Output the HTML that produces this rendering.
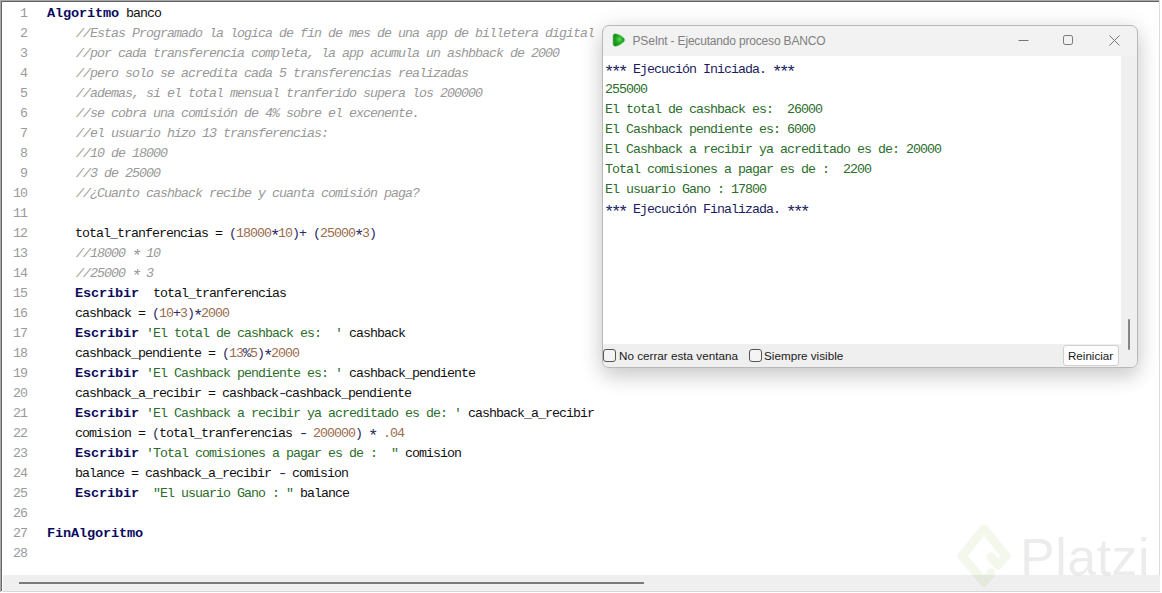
<!DOCTYPE html>
<html><head><meta charset="utf-8">
<style>
html,body{margin:0;padding:0;}
body{width:1162px;height:593px;position:relative;overflow:hidden;background:#fff;}
.abs{position:absolute;}
.ed-top{position:absolute;left:0;top:0;width:1160px;height:1px;background:#a9a9a9;}
.ed-top2{position:absolute;left:1px;top:1px;width:1159px;height:1px;background:#626262;}
.ed-left{position:absolute;left:0;top:0;width:1px;height:592px;background:#a9a9a9;}
.ed-left2{position:absolute;left:1px;top:1px;width:1px;height:590px;background:#666;}
.ed-right{position:absolute;left:1159px;top:0;width:1px;height:592px;background:#dcdcdc;}
.hscroll{position:absolute;left:3px;top:575px;width:1157px;height:16px;background:#efefef;}
.hscroll-b{position:absolute;left:2px;top:591px;width:1158px;height:1px;background:#d8d8d8;}
.hthumb{position:absolute;left:19px;top:582px;width:625px;height:2px;background:#7a7a7a;}
#code{position:absolute;left:0;top:4px;width:1162px;height:580px;}
.ln{position:absolute;left:0;width:27px;text-align:right;font-family:"Liberation Mono",monospace;font-size:13.3px;letter-spacing:-0.98px;color:#9a9a9a;line-height:20px;height:20px;}
.cl{position:absolute;left:47px;font-family:"Liberation Mono",monospace;font-size:13.3px;letter-spacing:-0.98px;line-height:20px;height:20px;white-space:pre;color:#111;}
.k{font-weight:bold;color:#0b0b5e;font-size:13.6px;letter-spacing:-0.16px;}
.c{color:#999;font-style:italic;position:relative;left:1px;}
.s{color:#2b6e2b;}
.n{color:#9c6c4e;}
.o{color:#2a2a62;}
.dash{display:inline-block;transform:translateX(0.5px) scaleX(1.35);}
.ast{display:inline-block;transform:translateY(2.6px) scale(1.3);}
/* window */
.win{position:absolute;left:602px;top:25px;width:534px;height:341px;border:1px solid #b8b8b8;border-radius:7px;background:#f2f2f2;box-shadow:0 3px 24px rgba(0,0,0,0.13), 0 10px 20px rgba(0,0,0,0.12);overflow:hidden;}
.title{position:absolute;left:29.5px;top:8px;font-family:"Liberation Sans",sans-serif;font-size:12px;letter-spacing:-0.18px;color:#808080;white-space:pre;}
.cons{position:absolute;left:0;top:30px;width:518px;height:288px;background:#fff;}
.vtrack{position:absolute;left:518px;top:30px;width:16px;height:311px;background:#efefef;}
.vthumb{position:absolute;left:525px;top:293px;width:2px;height:31px;background:#858585;border-radius:1px;}
.con{position:absolute;left:2px;font-family:"Liberation Mono",monospace;font-size:13.3px;letter-spacing:-0.98px;line-height:20px;height:20px;white-space:pre;}
.cn{color:#1c1c5c;}
.cg{color:#2b6e2b;}
.bbar{position:absolute;left:0;top:318px;width:518px;height:23px;background:#efefef;}
.cb{position:absolute;top:323px;width:11px;height:11px;border:1px solid #555;border-radius:3px;background:#f4f4f4;}
.lbl{position:absolute;top:323px;font-family:"Liberation Sans",sans-serif;font-size:11.7px;color:#1a1a1a;white-space:pre;}
.btn{position:absolute;left:460px;top:319px;width:54px;height:19px;border:1px solid #d0d0d0;border-radius:3px;background:#fdfdfd;}
.btnt{position:absolute;left:465px;top:323px;font-family:"Liberation Sans",sans-serif;font-size:11.6px;color:#1a1a1a;}
.platzi{position:absolute;left:1020px;top:527px;font-family:"Liberation Sans",sans-serif;font-size:52px;color:rgba(0,0,0,0.075);letter-spacing:0.5px;}
</style></head><body>
<div class="ed-top"></div><div class="ed-top2"></div><div class="ed-left"></div><div class="ed-left2"></div><div class="ed-right"></div>
<div id="code">
<div class="ln" style="top:0px">1</div>
<div class="cl" style="top:0px"><span class="k">Algoritmo</span> banco</div>
<div class="ln" style="top:20px">2</div>
<div class="cl" style="top:20px">    <span class="c">//Estas Programado la logica de fin de mes de una app de billetera digital</span></div>
<div class="ln" style="top:40px">3</div>
<div class="cl" style="top:40px">    <span class="c">//por cada transferencia completa, la app acumula un ashbback de 2000</span></div>
<div class="ln" style="top:60px">4</div>
<div class="cl" style="top:60px">    <span class="c">//pero solo se acredita cada 5 transferencias realizadas</span></div>
<div class="ln" style="top:80px">5</div>
<div class="cl" style="top:80px">    <span class="c">//ademas, si el total mensual tranferido supera los 200000</span></div>
<div class="ln" style="top:100px">6</div>
<div class="cl" style="top:100px">    <span class="c">//se cobra una comisión de 4% sobre el excenente.</span></div>
<div class="ln" style="top:120px">7</div>
<div class="cl" style="top:120px">    <span class="c">//el usuario hizo 13 transferencias:</span></div>
<div class="ln" style="top:140px">8</div>
<div class="cl" style="top:140px">    <span class="c">//10 de 18000</span></div>
<div class="ln" style="top:160px">9</div>
<div class="cl" style="top:160px">    <span class="c">//3 de 25000</span></div>
<div class="ln" style="top:180px">10</div>
<div class="cl" style="top:180px">    <span class="c">//¿Cuanto cashback recibe y cuanta comisión paga?</span></div>
<div class="ln" style="top:200px">11</div>
<div class="ln" style="top:220px">12</div>
<div class="cl" style="top:220px">    total_tranferencias = <span class="o">(</span><span class="n">18000</span><span class="o"><span class="ast">*</span></span><span class="n">10</span><span class="o">)+</span> <span class="o">(</span><span class="n">25000</span><span class="o"><span class="ast">*</span></span><span class="n">3</span><span class="o">)</span></div>
<div class="ln" style="top:240px">13</div>
<div class="cl" style="top:240px">    <span class="c">//18000 <span class="ast">*</span> 10</span></div>
<div class="ln" style="top:260px">14</div>
<div class="cl" style="top:260px">    <span class="c">//25000 <span class="ast">*</span> 3</span></div>
<div class="ln" style="top:280px">15</div>
<div class="cl" style="top:280px">    <span class="k">Escribir</span>  total_tranferencias</div>
<div class="ln" style="top:300px">16</div>
<div class="cl" style="top:300px">    cashback = <span class="o">(</span><span class="n">10</span><span class="o">+</span><span class="n">3</span><span class="o">)<span class="ast">*</span></span><span class="n">2000</span></div>
<div class="ln" style="top:320px">17</div>
<div class="cl" style="top:320px">    <span class="k">Escribir</span> <span class="s">'El total de cashback es:  '</span> cashback</div>
<div class="ln" style="top:340px">18</div>
<div class="cl" style="top:340px">    cashback_pendiente = <span class="o">(</span><span class="n">13</span><span class="o">%</span><span class="n">5</span><span class="o">)<span class="ast">*</span></span><span class="n">2000</span></div>
<div class="ln" style="top:360px">19</div>
<div class="cl" style="top:360px">    <span class="k">Escribir</span> <span class="s">'El Cashback pendiente es: '</span> cashback_pendiente</div>
<div class="ln" style="top:380px">20</div>
<div class="cl" style="top:380px">    cashback_a_recibir = cashback<span class="o"><span class="dash">-</span></span>cashback_pendiente</div>
<div class="ln" style="top:400px">21</div>
<div class="cl" style="top:400px">    <span class="k">Escribir</span> <span class="s">'El Cashback a recibir ya acreditado es de: '</span> cashback_a_recibir</div>
<div class="ln" style="top:420px">22</div>
<div class="cl" style="top:420px">    comision = <span class="o">(</span>total_tranferencias <span class="o"><span class="dash">-</span></span> <span class="n">200000</span><span class="o">)</span> <span class="o"><span class="ast">*</span></span> <span class="n">.04</span></div>
<div class="ln" style="top:440px">23</div>
<div class="cl" style="top:440px">    <span class="k">Escribir</span> <span class="s">'Total comisiones a pagar es de :  "</span> comision</div>
<div class="ln" style="top:460px">24</div>
<div class="cl" style="top:460px">    balance = cashback_a_recibir <span class="o"><span class="dash">-</span></span> comision</div>
<div class="ln" style="top:480px">25</div>
<div class="cl" style="top:480px">    <span class="k">Escribir</span>  <span class="s">"El usuario Gano : "</span> balance</div>
<div class="ln" style="top:500px">26</div>
<div class="ln" style="top:520px">27</div>
<div class="cl" style="top:520px"><span class="k">FinAlgoritmo</span></div>
<div class="ln" style="top:540px">28</div>
</div>
<div class="hscroll"></div><div class="hscroll-b"></div><div class="hthumb"></div>
<svg class="abs" style="left:955px;top:521px" width="60" height="68" viewBox="0 0 60 68"><g opacity="0.1"><path d="M36 52 L29 61 L7 35 L29 8 L51 35 L43 44 L36 36" fill="none" stroke="rgb(140,180,70)" stroke-width="9" stroke-linejoin="round" stroke-linecap="round"/></g></svg>
<div class="platzi">Platzi</div>
<div class="win">
 <svg class="abs" style="left:9px;top:7px" width="15" height="15" viewBox="0 0 15 15"><defs><radialGradient id="gg" cx="0.55" cy="0.45" r="0.6"><stop offset="0" stop-color="#5fd85f"/><stop offset="0.5" stop-color="#1fa51f"/><stop offset="1" stop-color="#128a12"/></radialGradient></defs><path d="M3 0.5 C1.5 0.5 0.8 1.8 0.8 3.5 L0.8 10.5 C0.8 12.3 1.8 13.5 3.5 13.5 C6.5 13.5 11 10.2 12.4 8.3 C13.1 7.4 13.1 6.4 12.4 5.5 C11 3.6 6.5 0.5 3 0.5 Z" fill="url(#gg)" stroke="#bdecbd" stroke-width="0.7"/></svg>
 <div class="title">PSeInt - Ejecutando proceso BANCO</div>
 <svg class="abs" style="left:405px;top:8px" width="125" height="16" viewBox="0 0 125 16">
  <line x1="10.5" y1="6.5" x2="20.5" y2="6.5" stroke="#777" stroke-width="1"/>
  <rect x="55.5" y="1.5" width="9" height="9" rx="1.8" fill="none" stroke="#777" stroke-width="1"/>
  <path d="M101.5 1.5 L111.5 11.5 M111.5 1.5 L101.5 11.5" stroke="#777" stroke-width="1"/>
 </svg>
 <div class="cons">
<div class="con cn" style="top:4px"><span class="ast">*</span><span class="ast">*</span><span class="ast">*</span> Ejecución Iniciada. <span class="ast">*</span><span class="ast">*</span><span class="ast">*</span></div>
<div class="con cg" style="top:24px">255000</div>
<div class="con cg" style="top:44px">El total de cashback es:  26000</div>
<div class="con cg" style="top:64px">El Cashback pendiente es: 6000</div>
<div class="con cg" style="top:84px">El Cashback a recibir ya acreditado es de: 20000</div>
<div class="con cg" style="top:104px">Total comisiones a pagar es de :  2200</div>
<div class="con cg" style="top:124px">El usuario Gano : 17800</div>
<div class="con cn" style="top:144px"><span class="ast">*</span><span class="ast">*</span><span class="ast">*</span> Ejecución Finalizada. <span class="ast">*</span><span class="ast">*</span><span class="ast">*</span></div>
 </div>
 <div class="vtrack"></div>
 <div class="vthumb"></div>
 <div class="bbar"></div>
 <div class="cb" style="left:0px"></div>
 <div class="lbl" style="left:16px">No cerrar esta ventana</div>
 <div class="cb" style="left:146px"></div>
 <div class="lbl" style="left:161px">Siempre visible</div>
 <div class="btn"></div>
 <div class="btnt">Reiniciar</div>
</div>
</body></html>
